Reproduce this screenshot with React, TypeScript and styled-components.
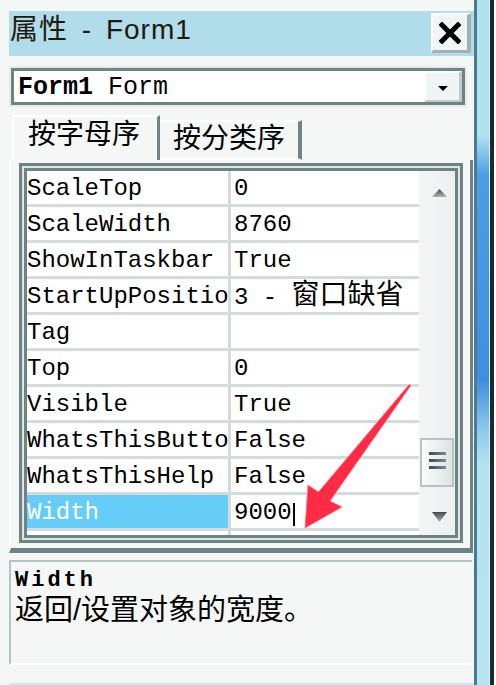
import React from "react";
import styled, { createGlobalStyle } from "styled-components";

const MONO = `"Liberation Mono", "Noto Sans CJK SC", monospace`;
const SANS = `"Liberation Sans", "Noto Sans CJK SC", sans-serif`;
const FRAME = "#6e8484";
const GRIDLINE = "#d4dbdb";

const GlobalStyle = createGlobalStyle`
  html, body { margin: 0; padding: 0; background: #f5f7f6; }
  * { box-sizing: border-box; }
`;

type Prop = { name: string; value: React.ReactNode; selected?: boolean };

export default function App() {
  const props: Prop[] = [
    { name: "ScaleTop", value: "0" },
    { name: "ScaleWidth", value: "8760" },
    { name: "ShowInTaskbar", value: "True" },
    { name: "StartUpPositio", value: <>3 - <CjkValue>窗口缺省</CjkValue></> },
    { name: "Tag", value: "" },
    { name: "Top", value: "0" },
    { name: "Visible", value: "True" },
    { name: "WhatsThisButto", value: "False" },
    { name: "WhatsThisHelp", value: "False" },
    { name: "Width", value: <>9000<Caret /></>, selected: true },
  ];

  return (
    <Window>
      <GlobalStyle />
      <Main>
        <TitleBar>
          <Title>属性 - Form1</Title>
          <CloseButton>
            <svg width="22" height="22" viewBox="0 0 22 22">
              <path d="M3 3 L19 19 M19 3 L3 19" stroke="#000" strokeWidth="5" strokeLinecap="square" />
            </svg>
          </CloseButton>
        </TitleBar>

        <Combo>
          <ComboText>
            <b>Form1</b> Form
          </ComboText>
          <DropButton>
            <DropTriangle />
          </DropButton>
        </Combo>

        <TabsRow>
          <Tab $active>按字母序</Tab>
          <Tab>按分类序</Tab>
        </TabsRow>

        <TabPage>
          <GridFrame>
            <GridInner>
              <Rows>
                {props.map((p) => (
                  <Row key={p.name}>
                    <NameCell $selected={p.selected}>{p.name}</NameCell>
                    <ValueCell>{p.value}</ValueCell>
                  </Row>
                ))}
                <FillerRow>
                  <NameCell />
                </FillerRow>
              </Rows>
              <ScrollBar>
                <ArrowBox>
                  <ArrowGlyph $dir="up" />
                </ArrowBox>
                <Thumb $offset={231}>
                  <Grip />
                  <Grip />
                  <Grip />
                </Thumb>
                <ArrowBox $bottom>
                  <ArrowGlyph $dir="down" />
                </ArrowBox>
              </ScrollBar>
            </GridInner>
          </GridFrame>
        </TabPage>

        <Description>
          <DescTitle>Width</DescTitle>
          <DescText>返回/设置对象的宽度。</DescText>
        </Description>

        <BottomLine />
      </Main>

      <RightEdge>
        <EdgeBorder />
        <EdgeGlass />
        <EdgeGap />
        <EdgeDark />
        <EdgeWhite />
      </RightEdge>

      <Annotation width="496" height="685" viewBox="0 0 496 685">
        <polygon
          points="410.8,385.6 330,501 342,507 305,528 308,485 318.5,492 409.2,384.4"
          fill="#fd2b45"
          stroke="#ff6f82"
          strokeWidth="0.8"
          strokeLinejoin="round"
        />
      </Annotation>
    </Window>
  );
}

const Window = styled.div`
  position: relative;
  display: flex;
  width: 496px;
  height: 685px;
  overflow: hidden;
  background: #f5f7f6;
`;

const Main = styled.div`
  width: 474px;
  height: 685px;
  display: flex;
  flex-direction: column;
`;

const TitleBar = styled.div`
  margin: 11px 0 0 9px;
  height: 45px;
  background: #b0dde9;
  display: flex;
  align-items: flex-start;
  justify-content: space-between;
  padding: 2px 3px 0 1px;
`;

const Title = styled.div`
  font-family: ${SANS};
  font-size: 28px;
  line-height: 34px;
  letter-spacing: 1px;
  word-spacing: 5px;
  color: #23180f;
  white-space: nowrap;
`;

const CloseButton = styled.div`
  width: 40px;
  height: 40px;
  background: #f2f5f5;
  border-top: 2px solid #ffffff;
  border-left: 2px solid #ffffff;
  border-right: 4px solid #a3b1b1;
  border-bottom: 3px solid #a3b1b1;
  display: flex;
  align-items: center;
  justify-content: center;
`;

const Combo = styled.div`
  margin: 12px 0 0 11px;
  width: 454px;
  height: 37px;
  border: 3px solid ${FRAME};
  background: #ffffff;
  display: flex;
  box-shadow: 0 0 0 2px #e6ecec;
`;

const ComboText = styled.div`
  flex: 1;
  padding: 3px 0 0 4px;
  font-family: ${MONO};
  font-size: 25px;
  line-height: 28px;
  color: #000;
  white-space: pre;
`;

const DropButton = styled.div`
  width: 38px;
  background: #f1f4f4;
  border-top: 2px solid #ffffff;
  border-left: 2px solid #ffffff;
  border-right: 3px solid #bfcaca;
  border-bottom: 2px solid #bfcaca;
  display: flex;
  align-items: center;
  justify-content: center;
`;

const DropTriangle = styled.div`
  width: 0;
  height: 0;
  margin-top: 3px;
  border-left: 5px solid transparent;
  border-right: 5px solid transparent;
  border-top: 5px solid #000;
`;

const TabsRow = styled.div`
  margin: 10px 0 0 9px;
  padding-left: 3px;
  height: 45px;
  display: flex;
  align-items: flex-end;
`;

const Tab = styled.div<{ $active?: boolean }>`
  height: ${(p) => (p.$active ? 45 : 40)}px;
  width: ${(p) => (p.$active ? 148 : 142)}px;
  border-top: 2px solid #ffffff;
  border-left: ${(p) => (p.$active ? "2px solid #ffffff" : "none")};
  border-right: ${(p) => (p.$active ? 3 : 4)}px solid ${FRAME};
  border-bottom: ${(p) => (p.$active ? "none" : "2px solid #ffffff")};
  padding: ${(p) => (p.$active ? "1px 0 0 14px" : "0 0 0 13px")};
  font-family: ${SANS};
  font-size: 28px;
  line-height: 34px;
  color: #000;
  white-space: nowrap;
`;

const TabPage = styled.div`
  margin-left: 9px;
  width: 464px;
  border-left: 2px solid #ffffff;
  border-right: 3px solid ${FRAME};
  border-bottom: 5px solid ${FRAME};
  padding: 3px 7px 5px 8px;
`;

const GridFrame = styled.div`
  height: 380px;
  border: 3px solid ${FRAME};
  padding: 2px;
  background: #dfe6e6;
`;

const GridInner = styled.div`
  height: 100%;
  border: 3px solid ${FRAME};
  background: #ffffff;
  display: flex;
`;

const Rows = styled.div`
  flex: 1;
  display: flex;
  flex-direction: column;
  overflow: hidden;
`;

const Row = styled.div`
  flex-shrink: 0;
  height: 36px;
  display: flex;
  border-bottom: 3px solid ${GRIDLINE};
`;

const FillerRow = styled.div`
  flex: 1;
  display: flex;
`;

const NameCell = styled.div<{ $selected?: boolean }>`
  width: 204px;
  flex-shrink: 0;
  border-right: 3px solid ${GRIDLINE};
  background: ${(p) => (p.$selected ? "#66cdf9" : "#ffffff")};
  color: ${(p) => (p.$selected ? "#ffffff" : "#000000")};
  font-family: ${MONO};
  font-size: 24px;
  line-height: 31px;
  padding-top: 2px;
  white-space: nowrap;
`;

const ValueCell = styled.div`
  flex: 1;
  padding: 2px 0 0 3px;
  font-family: ${MONO};
  font-size: 24px;
  line-height: 31px;
  color: #000;
  white-space: pre;
`;

const CjkValue = styled.span`
  font-family: ${SANS};
  font-size: 28px;
  line-height: 1;
`;

const Caret = styled.span`
  display: inline-block;
  width: 2px;
  height: 23px;
  margin-left: 1px;
  background: #000;
  vertical-align: -7px;
`;

const ScrollBar = styled.div`
  width: 36px;
  flex-shrink: 0;
  display: flex;
  flex-direction: column;
  align-items: center;
  background: linear-gradient(to right, #f4f6f6, #eceff0);
`;

const ArrowBox = styled.div<{ $bottom?: boolean }>`
  width: 100%;
  height: 36px;
  margin-top: ${(p) => (p.$bottom ? "auto" : "0")};
  display: flex;
  justify-content: center;
  align-items: center;
  padding: ${(p) => (p.$bottom ? "0 0 0 5px" : "8px 0 0 5px")};
`;

const ArrowGlyph = styled.div<{ $dir: "up" | "down" }>`
  width: 15px;
  height: ${(p) => (p.$dir === "up" ? 8 : 10)}px;
  background: linear-gradient(to bottom, #3e4c4c, #aab7b7);
  clip-path: ${(p) =>
    p.$dir === "up" ? "polygon(50% 0, 100% 100%, 0 100%)" : "polygon(0 0, 100% 0, 50% 100%)"};
`;

const Thumb = styled.div<{ $offset: number }>`
  margin-top: ${(p) => p.$offset}px;
  width: 34px;
  height: 49px;
  border: 2px solid #b8c4c4;
  background: linear-gradient(to right, #fbfcfc, #dde4e4);
  display: flex;
  flex-direction: column;
  align-items: center;
  gap: 4px;
  padding-top: 12px;
`;

const Grip = styled.div`
  width: 17px;
  height: 3px;
  background: linear-gradient(to right, #3f4f4f, #7d8d8d);
`;

const Description = styled.div`
  margin: 7px 0 0 9px;
  width: 463px;
  height: 105px;
  border-top: 2px solid #b3c4c4;
  border-left: 2px solid #b3c4c4;
  border-bottom: 2px solid #ffffff;
  padding: 6px 0 0 4px;
  color: #000;
`;

const DescTitle = styled.div`
  font-family: ${MONO};
  font-weight: bold;
  font-size: 22px;
  letter-spacing: 3px;
  line-height: 26px;
`;

const DescText = styled.div`
  font-family: ${SANS};
  font-size: 29px;
  line-height: 32px;
  white-space: nowrap;
`;

const BottomLine = styled.div`
  margin: auto 0 0 9px;
  height: 2px;
  background: #cfe9ee;
`;

const RightEdge = styled.div`
  width: 22px;
  height: 685px;
  display: flex;
`;

const EdgeBorder = styled.div`
  width: 3px;
  background: #4a7b93;
`;

const EdgeGlass = styled.div`
  width: 12px;
  background: linear-gradient(
    to bottom,
    #b3e2ef 0,
    #b3e2ef 135px,
    #4c9fe4 175px,
    #3f8fdf 380px,
    #8fc9ec 430px,
    #b5e3ef 465px,
    #b8e4f0 100%
  );
`;

const EdgeGap = styled.div`
  width: 1px;
  background: #dcedf2;
`;

const EdgeDark = styled.div`
  width: 4px;
  background: #1b2a31;
`;

const EdgeWhite = styled.div`
  flex: 1;
  background: #ffffff;
`;

const Annotation = styled.svg`
  position: absolute;
  left: 0;
  top: 0;
  pointer-events: none;
`;
